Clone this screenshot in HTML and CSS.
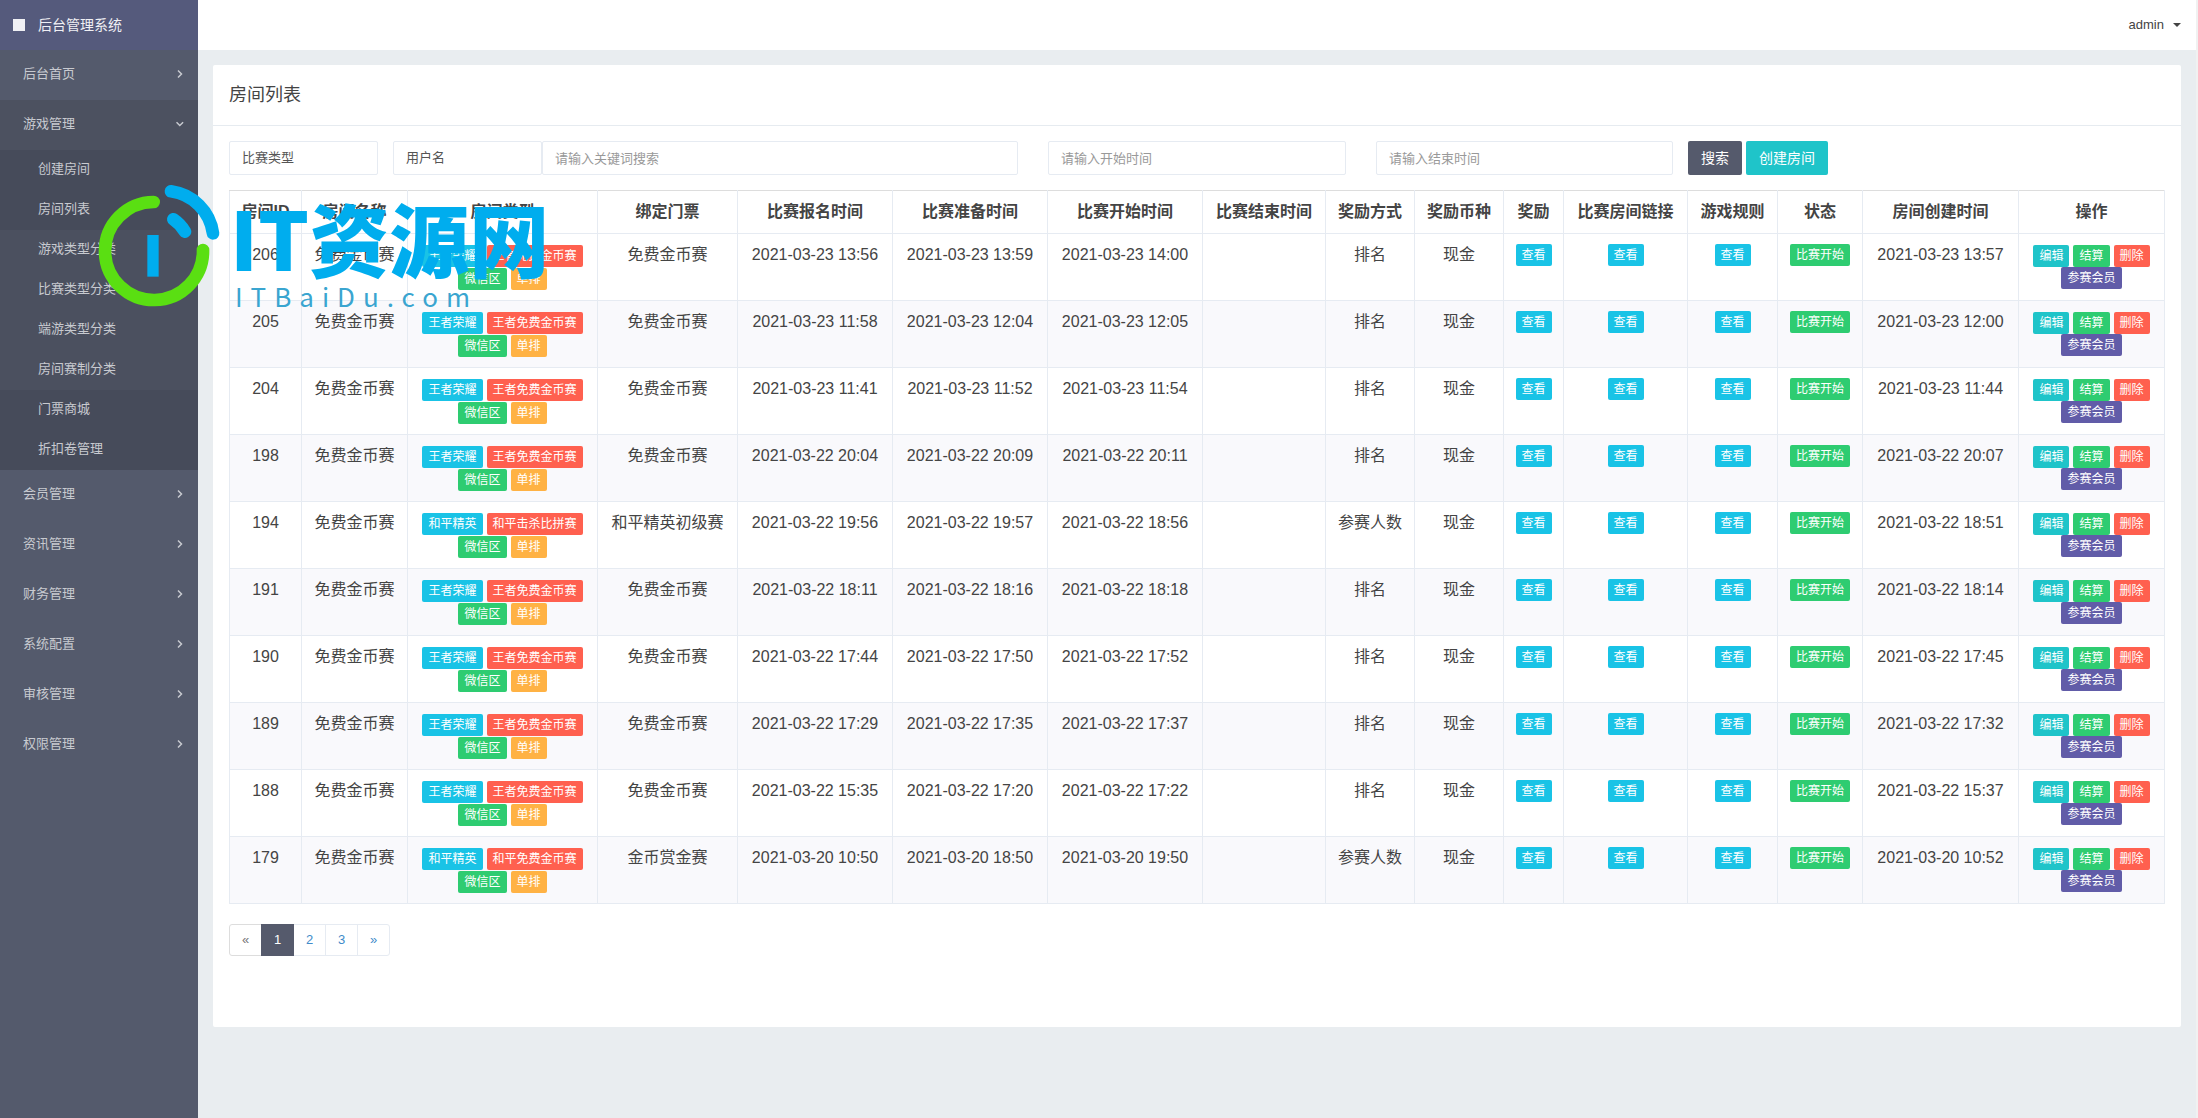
FILE: index.html
```html
<!DOCTYPE html>
<html lang="zh-CN">
<head>
<meta charset="utf-8">
<title>后台管理系统</title>
<link rel="stylesheet" href="styles.css">
</head>
<body>
<div class="app">
  <aside class="sidebar">
    <a class="brand" href="#"><span class="brand-mark"></span>后台管理系统</a>
    <nav class="menu">
      <a class="menu-item" href="#">后台首页<svg class="chevron" viewBox="0 0 8 10"><path d="M2 1.5 5.5 5 2 8.5"/></svg></a>
      <a class="menu-item open" href="#">游戏管理<svg class="chevron" viewBox="0 0 8 10"><path d="M.5 3.2 3.800 6.500 7.100 3.200"/></svg></a>
      <div class="submenu">
        <a href="#">创建房间</a>
        <a href="#">房间列表</a>
        <a class="lit" href="#">游戏类型分类</a>
        <a class="lit" href="#">比赛类型分类</a>
        <a class="lit" href="#">端游类型分类</a>
        <a class="lit" href="#">房间赛制分类</a>
        <a href="#">门票商城</a>
        <a href="#">折扣卷管理</a>
      </div>
      <a class="menu-item" href="#">会员管理<svg class="chevron" viewBox="0 0 8 10"><path d="M2 1.5 5.5 5 2 8.5"/></svg></a>
      <a class="menu-item" href="#">资讯管理<svg class="chevron" viewBox="0 0 8 10"><path d="M2 1.5 5.5 5 2 8.5"/></svg></a>
      <a class="menu-item" href="#">财务管理<svg class="chevron" viewBox="0 0 8 10"><path d="M2 1.5 5.5 5 2 8.5"/></svg></a>
      <a class="menu-item" href="#">系统配置<svg class="chevron" viewBox="0 0 8 10"><path d="M2 1.5 5.5 5 2 8.5"/></svg></a>
      <a class="menu-item" href="#">审核管理<svg class="chevron" viewBox="0 0 8 10"><path d="M2 1.5 5.5 5 2 8.5"/></svg></a>
      <a class="menu-item" href="#">权限管理<svg class="chevron" viewBox="0 0 8 10"><path d="M2 1.5 5.5 5 2 8.5"/></svg></a>
    </nav>
  </aside>
  <div class="main">
    <header class="topbar">
      <button class="user" type="button">admin<span class="caret"></span></button>
    </header>
    <section class="panel">
      <h1 class="panel-title">房间列表</h1>
      <div class="panel-body">
        <form class="filters">
          <select class="field" aria-label="比赛类型"><option>比赛类型</option></select>
          <div class="keyword">
            <select class="field" aria-label="搜索字段"><option>用户名</option></select>
            <input class="field" type="text" placeholder="请输入关键词搜索" aria-label="关键词">
          </div>
          <div class="date"><input class="field" type="text" placeholder="请输入开始时间" aria-label="开始时间"></div>
          <div class="date"><input class="field" type="text" placeholder="请输入结束时间" aria-label="结束时间"></div>
          <div class="actions">
            <button class="btn search" type="button">搜索</button>
            <button class="btn create" type="button">创建房间</button>
          </div>
        </form>
        <table class="rooms">
          <colgroup>
            <col class="c-id"><col class="c-name"><col class="c-type"><col class="c-ticket">
            <col class="c-time"><col class="c-time"><col class="c-time"><col class="c-end">
            <col class="c-way"><col class="c-way"><col class="c-prize"><col class="c-link">
            <col class="c-rule"><col class="c-status"><col class="c-created"><col class="c-ops">
          </colgroup>
          <thead>
            <tr><th>房间ID</th><th>房间名称</th><th>房间类型</th><th>绑定门票</th><th>比赛报名时间</th><th>比赛准备时间</th><th>比赛开始时间</th><th>比赛结束时间</th><th>奖励方式</th><th>奖励币种</th><th>奖励</th><th>比赛房间链接</th><th>游戏规则</th><th>状态</th><th>房间创建时间</th><th>操作</th></tr>
          </thead>
          <tbody id="room-rows"></tbody>
        </table>
        <nav class="pages" aria-label="分页">
          <span class="page off">«</span>
          <span class="page current">1</span>
          <a class="page" href="#">2</a>
          <a class="page" href="#">3</a>
          <a class="page" href="#">»</a>
        </nav>
      </div>
    </section>
  </div>
</div>
<div class="watermark">
  <svg class="wm-logo" viewBox="0 0 420 405">
    <path class="green" d="M191 66A147 147 0 1 0 339 210"/>
    <path class="blue" d="M243 34A147 147 0 0 1 369 160M250 118Q272 133 285 155"/>
    <path class="bar" d="M172 165h34v125h-34z"/>
  </svg>
  <div class="wm-text">
    <div class="wm-name">IT资源网</div>
    <div class="wm-site">ITBaiDu.com</div>
  </div>
</div>
<script src="app.js"></script>
</body>
</html>
```
FILE: styles.css
```css
* { box-sizing: border-box; }

body {
  margin: 0;
  position: relative;
  background: #e9edf0;
  color: #444;
  font: 13px/20px "Liberation Sans", "Noto Sans CJK SC", sans-serif;
}

a { color: inherit; text-decoration: none; }
button { border: 0; font: inherit; cursor: pointer; }

.app {
  display: flex;
  min-height: 100vh;
  border-right: 2px solid #f1f1f1;
}

/* sidebar */
.sidebar {
  flex: 0 0 198px;
  background: #545a6c;
  color: #c8cad0;
}
.brand {
  display: flex;
  align-items: center;
  gap: 13px;
  height: 50px;
  padding-left: 13px;
  background: #555a7c;
  color: #f0f0f4;
  font-size: 14px;
}
.brand-mark { width: 12px; height: 12px; background: #f0f0f4; }
.menu-item {
  display: flex;
  align-items: center;
  justify-content: space-between;
  height: 50px;
  padding: 0 14px 2px 23px;
}
.menu-item.open { background: #4c5160; }
.chevron {
  width: 8px;
  height: 10px;
  fill: none;
  stroke: #c8cad0;
  stroke-width: 1.5;
}
.submenu a {
  display: block;
  padding: 9px 0 11px 38px;
  background: #464b5a;
}
.submenu .lit { background: #4b505f; }

/* top bar */
.main { flex: 1; min-width: 0; }
.topbar {
  display: flex;
  justify-content: flex-end;
  height: 50px;
  padding-right: 15px;
  background: #fff;
}
.user {
  display: flex;
  align-items: center;
  gap: 9px;
  padding: 0;
  background: none;
  color: #444;
}
.caret {
  border: 4px solid transparent;
  border-top-color: #444;
  border-bottom: 0;
}

/* panel */
.panel {
  margin: 15px;
  background: #fff;
  border-radius: 2px;
}
.panel-title {
  margin: 0;
  padding: 20px 16px;
  border-bottom: 1px solid #e6ebf0;
  font-size: 18px;
  font-weight: 400;
  line-height: 20px;
}
.panel-body { padding: 15px 17px 71px 16px; }

.filters {
  display: grid;
  grid-template-columns: 149fr 625fr 313fr 312fr 476fr;
  gap: 15px;
}
.keyword { display: grid; grid-template-columns: 149fr 476fr; }
.date { padding-left: 15px; }
.actions { display: flex; gap: 4px; }
.field {
  appearance: none;
  width: 100%;
  height: 34px;
  padding: 0 12px;
  border: 1px solid #e6ebf2;
  border-radius: 2px;
  background: #fff;
  color: #555;
  font: inherit;
}
.field::placeholder { color: #999; }
.btn {
  height: 34px;
  padding: 0 13px;
  border-radius: 2px;
  color: #fff;
  font-size: 14px;
}
.search { background: #555a6c; }
.create { background: #1fc4c9; }

/* table */
.rooms {
  width: 100%;
  margin: 15px 0 20px;
  border-collapse: collapse;
  table-layout: fixed;
  font-size: 16px;
  line-height: 22px;
  text-align: center;
}
.c-id { width: 72px; }
.c-name { width: 106px; }
.c-type { width: 190px; }
.c-ticket { width: 140px; }
.c-time { width: 155px; }
.c-end { width: 123px; }
.c-link { width: 124px; }
.c-way { width: 89px; }
.c-prize { width: 60px; }
.c-rule { width: 90px; }
.c-status { width: 85px; }
.c-created { width: 156px; }
.c-ops { width: 146px; }
.rooms th, .rooms td {
  padding: 10px 4px;
  border: 1px solid #e6ebf2;
  vertical-align: top;
  white-space: nowrap;
}
.rooms th { height: 43px; border-top-color: #ddd; }
.rooms td { height: 67px; }
.rooms tbody tr:nth-child(even) { background: #f9f9fc; }

.tags, .ops {
  display: flex;
  flex-wrap: wrap;
  justify-content: center;
  gap: 1px 4px;
  padding: 1px 6px 0;
}
.ops { row-gap: 0; }
.tag {
  display: block;
  margin: 0 auto;
  padding: 0 6px;
  border-radius: 2px;
  color: #fff;
  font-size: 12px;
  line-height: 22px;
}
.tags .tag, .ops .tag { margin: 0; }
.link { width: 36px; }
.status { width: 60px; }
.cyan { background: #19c3e6; }
.red { background: #ff604f; }
.mint { background: #2ecc71; }
.amber { background: #ffb244; }
.teal { background: #1fc4c9; }
.violet { background: #615ca8; }

/* pagination */
.pages { display: flex; }
.page {
  width: 33px;
  height: 32px;
  margin-right: -1px;
  border: 1px solid #e6ebf2;
  color: #428bca;
  line-height: 30px;
  text-align: center;
}
.page:first-child { border-radius: 3px 0 0 3px; }
.page:last-child { border-radius: 0 3px 3px 0; }
.page.off { border-color: #ddd; color: #777; }
.page.current { z-index: 1; border-color: #555a6c; background: #555a6c; color: #fff; }

/* watermark over the page */
.watermark {
  position: absolute;
  top: 180px;
  left: 90px;
  display: flex;
  pointer-events: none;
  color: #00adee;
}
.wm-logo { width: 140px; height: 135px; fill: none; stroke-width: 38; stroke-linecap: round; }
.wm-logo .green { stroke: #5adf12; }
.wm-logo .blue { stroke: #00adee; }
.wm-logo .bar { fill: #00adee; }
.wm-text { padding-top: 16px; }
.wm-name {
  font: 900 80px/80px "Noto Sans CJK SC", sans-serif;
  white-space: nowrap;
}
.wm-site {
  padding: 2px 0 0 5px;
  color: #3aa5d0;
  font: 400 26px/36px "Noto Sans CJK SC", sans-serif;
  letter-spacing: 8px;
}
```
FILE: app.js
```js
const FREE = '免费金币赛';
const KING = ['王者荣耀', '王者免费金币赛'];

// id, game, mode, ticket, sign-up, ready, start, reward type, created
const rooms = [
  [206, ...KING, FREE, '2021-03-23 13:56', '2021-03-23 13:59', '2021-03-23 14:00', '排名', '2021-03-23 13:57'],
  [205, ...KING, FREE, '2021-03-23 11:58', '2021-03-23 12:04', '2021-03-23 12:05', '排名', '2021-03-23 12:00'],
  [204, ...KING, FREE, '2021-03-23 11:41', '2021-03-23 11:52', '2021-03-23 11:54', '排名', '2021-03-23 11:44'],
  [198, ...KING, FREE, '2021-03-22 20:04', '2021-03-22 20:09', '2021-03-22 20:11', '排名', '2021-03-22 20:07'],
  [194, '和平精英', '和平击杀比拼赛', '和平精英初级赛', '2021-03-22 19:56', '2021-03-22 19:57', '2021-03-22 18:56', '参赛人数', '2021-03-22 18:51'],
  [191, ...KING, FREE, '2021-03-22 18:11', '2021-03-22 18:16', '2021-03-22 18:18', '排名', '2021-03-22 18:14'],
  [190, ...KING, FREE, '2021-03-22 17:44', '2021-03-22 17:50', '2021-03-22 17:52', '排名', '2021-03-22 17:45'],
  [189, ...KING, FREE, '2021-03-22 17:29', '2021-03-22 17:35', '2021-03-22 17:37', '排名', '2021-03-22 17:32'],
  [188, ...KING, FREE, '2021-03-22 15:35', '2021-03-22 17:20', '2021-03-22 17:22', '排名', '2021-03-22 15:37'],
  [179, '和平精英', '和平免费金币赛', '金币赏金赛', '2021-03-20 10:50', '2021-03-20 18:50', '2021-03-20 19:50', '参赛人数', '2021-03-20 10:52']
];

const view = '<td><button type="button" class="tag link cyan">查看</button></td>';

document.getElementById('room-rows').innerHTML = rooms.map(
  ([id, game, mode, ticket, signup, ready, start, reward, created]) => `<tr>
    <td>${id}</td><td>${FREE}</td>
    <td><div class="tags"><span class="tag cyan">${game}</span><span class="tag red">${mode}</span><span class="tag mint">微信区</span><span class="tag amber">单排</span></div></td>
    <td>${ticket}</td><td>${signup}</td><td>${ready}</td><td>${start}</td><td></td>
    <td>${reward}</td><td>现金</td>${view}${view}${view}
    <td><span class="tag status mint">比赛开始</span></td><td>${created}</td>
    <td><div class="ops"><button type="button" class="tag teal">编辑</button><button type="button" class="tag mint">结算</button><button type="button" class="tag red">删除</button><button type="button" class="tag violet">参赛会员</button></div></td>
  </tr>`
).join('');
```
